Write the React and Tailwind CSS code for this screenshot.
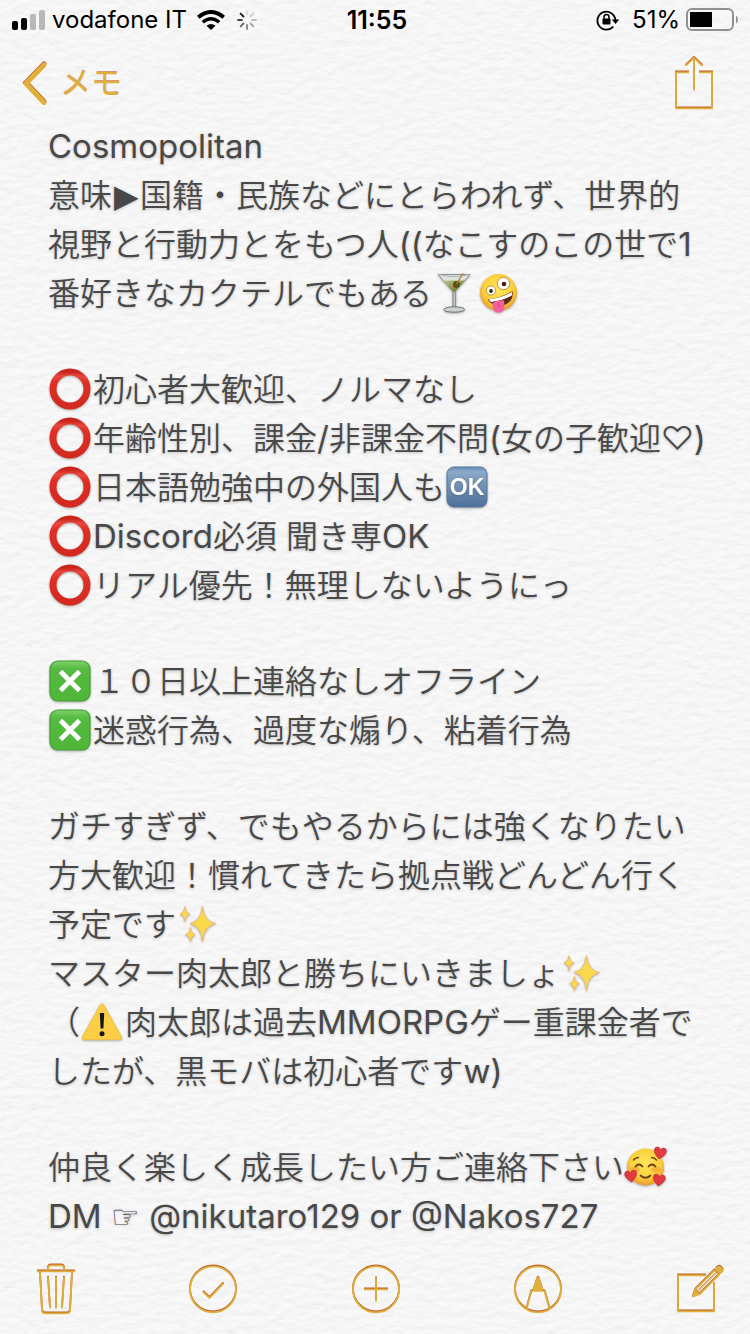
import React from "react";

/* ---------- paper background ---------- */

function Paper() {
  return (
    <svg aria-hidden="true" className="absolute inset-0 -z-10 h-full w-full">
      <filter id="paper" x="0" y="0" width="100%" height="100%" colorInterpolationFilters="sRGB">
        <feTurbulence type="fractalNoise" baseFrequency="0.08 0.14" numOctaves="3" seed="4" result="noise" />
        <feDiffuseLighting in="noise" lightingColor="#ffffff" surfaceScale="0.5" diffuseConstant="1.09">
          <feDistantLight azimuth="260" elevation="62" />
        </feDiffuseLighting>
      </filter>
      <rect width="100%" height="100%" fill="#f7f7f7" />
      <rect width="100%" height="100%" filter="url(#paper)" opacity="0.35" />
    </svg>
  );
}

/* ---------- letterpress icons ---------- */

function Press({ w, h, children, className = "" }) {
  return (
    <svg
      aria-hidden="true"
      width={w}
      height={h}
      viewBox={`0 0 ${w} ${h}`}
      fill="none"
      strokeWidth="1.8"
      className={`block overflow-visible ${className}`}
    >
      <g stroke="#bd5a28" fill="none" color="#bd5a28" transform="translate(0 -0.6)">{children}</g>
      <g stroke="#dfb03c" fill="none" color="#dfb03c" transform="translate(0 0.4)">{children}</g>
    </svg>
  );
}

const BackIcon = () => (
  <Press w={28} h={44}>
    <path d="M24 3.500 6 22.200 24 41" strokeWidth="5" strokeLinecap="round" />
  </Press>
);

const ShareIcon = () => (
  <Press w={40} h={54}>
    <path d="M15 16H2v36h36V16H25" />
    <path d="M20 34V2M11.500 9.500 20 1.500l8.500 8" />
  </Press>
);

const TrashIcon = () => (
  <Press w={38} h={50}>
    <path d="M0 7h38" />
    <path d="M11 7V4q0-3 3-3h10q3 0 3 3v3" />
    <path d="M3 8l2 38q.2 3 3 3h22q2.800 0 3-3l2-38" />
    <path d="M11 12.500l2 31.500M19 12.500V44M27 12.500 25 44" />
  </Press>
);

const CheckIcon = () => (
  <Press w={48} h={48}>
    <circle cx="24" cy="24" r="23" />
    <path d="M14 26.500l6.500 6L34.500 18" />
  </Press>
);

const PlusIcon = () => (
  <Press w={48} h={48}>
    <circle cx="24" cy="24" r="23" />
    <path d="M24 12v24M12 24h24" />
  </Press>
);

const MarkupIcon = () => (
  <Press w={48} h={48}>
    <circle cx="24" cy="24" r="23" />
    <path d="M12.500 43.500 17 27q.4-1.500 1.500-1.500h11q1.100 0 1.500 1.500l4.500 16.500" />
    <path d="M18.500 25.500 22.600 12.500q1.400-2.400 2.800 0l4.100 13z" fill="currentColor" stroke="none" />
  </Press>
);

const ComposeIcon = () => (
  <Press w={48} h={48}>
    <path d="M30 10H2v36h36V18" />
    <path d="M17 31l2.500-7L38.500 5l4.500 4.500L24 28.500z" strokeLinejoin="round" />
    <path d="M22 26 40.500 7.500" strokeWidth="1" />
    <path d="M17 31l2.500-7 4.500 4.500z" fill="currentColor" stroke="none" />
    <path d="M40.500 3l1.500-1.300q1.500-1 2.800.3l1.200 1.200q1.300 1.500.2 2.800L44.800 7.500z" fill="currentColor" />
  </Press>
);

/* ---------- emoji ---------- */

function Emoji({ label, children }) {
  return (
    <svg
      role="img"
      aria-label={label}
      viewBox="0 0 42 42"
      className="mr-0.5 mb-0.5 ml-px inline-block h-[42px] w-[42px] shrink-0 overflow-visible drop-shadow-[0_1px_1px_rgba(0,0,0,0.3)]"
    >
      {children}
    </svg>
  );
}

const Circle = () => (
  <Emoji label="まる">
    <defs>
      <linearGradient id="red" x1="0" y1="0" x2="0" y2="1">
        <stop offset="0" stopColor="#c9251c" />
        <stop offset=".12" stopColor="#e8483e" />
        <stop offset=".3" stopColor="#e02f24" />
        <stop offset="1" stopColor="#d3291f" />
      </linearGradient>
    </defs>
    <circle cx="21" cy="21" r="17" fill="none" stroke="url(#red)" strokeWidth="7" />
  </Emoji>
);

const Cross = () => (
  <Emoji label="ばつ">
    <defs>
      <linearGradient id="green" x1="0" y1="0" x2="0" y2="1">
        <stop offset="0" stopColor="#7ed169" />
        <stop offset=".2" stopColor="#55bb41" />
        <stop offset="1" stopColor="#4fb638" />
      </linearGradient>
    </defs>
    <rect x="1" y="1" width="40" height="40" rx="8" fill="url(#green)" stroke="#459f34" strokeWidth="1.200" />
    <path d="M11.500 11.500l19 19M30.500 11.500l-19 19" stroke="#fff" strokeWidth="4.800" />
  </Emoji>
);

const Ok = () => (
  <Emoji label="OK">
    <defs>
      <linearGradient id="blue" x1="0" y1="0" x2="0" y2="1">
        <stop offset="0" stopColor="#6a8db3" />
        <stop offset=".12" stopColor="#8ba9c8" />
        <stop offset="1" stopColor="#4d7099" />
      </linearGradient>
    </defs>
    <rect x="1" y="1" width="40" height="40" rx="7" fill="url(#blue)" stroke="#53779f" />
    <text x="21" y="29" textAnchor="middle" fill="#fff" fontSize="23" className="font-['Liberation_Sans'] font-bold">OK</text>
  </Emoji>
);

const Cocktail = () => (
  <Emoji label="カクテル">
    <defs>
      <linearGradient id="drink" x1="0" y1="0" x2="1" y2="1">
        <stop offset="0" stopColor="#c3c88c" />
        <stop offset="1" stopColor="#5f6b1c" />
      </linearGradient>
    </defs>
    <path d="M5 2.500h32L23 18.500q-2 2.500-4 0z" fill="#dfe3e0" stroke="#7f8785" strokeWidth=".9" />
    <path d="M10 8.500h22l-9 10q-2 2-4 0z" fill="url(#drink)" />
    <path d="M6 2.500q15 4 30 0" fill="none" stroke="#aab2af" />
    <circle cx="23.500" cy="12.500" r="3.400" fill="#4d5918" />
    <circle cx="21.500" cy="14" r="1.500" fill="#a33320" />
    <path d="M23.500 12 30 1.500" stroke="#b98334" strokeWidth="1.400" />
    <path d="M20 19v16M22.500 19v16" stroke="#8d9391" strokeWidth="1.300" />
    <ellipse cx="21.200" cy="37.500" rx="10.500" ry="2.700" fill="#cdd1cf" stroke="#6d7472" />
  </Emoji>
);

function FaceGradient() {
  return (
    <defs>
      <radialGradient id="face" cx=".5" cy=".4" r=".62">
        <stop offset="0" stopColor="#ffe75a" />
        <stop offset=".65" stopColor="#fbcf3e" />
        <stop offset="1" stopColor="#e8932a" />
      </radialGradient>
    </defs>
  );
}

const Zany = () => (
  <Emoji label="おどけた顔">
    <FaceGradient />
    <circle cx="20.500" cy="20.500" r="18.500" fill="url(#face)" />
    <circle cx="13" cy="18.500" r="4.600" fill="#fff" stroke="#b57d2c" strokeWidth=".8" />
    <circle cx="13" cy="19" r="1.900" fill="#3d2415" />
    <circle cx="25.500" cy="11.500" r="6.200" fill="#fff" stroke="#b57d2c" strokeWidth=".8" />
    <circle cx="26" cy="12" r="2.300" fill="#3d2415" />
    <path d="M9.500 27.500q14-1.500 25-8.500q1.500 10-7 13.500-11 4-18-5z" fill="#5b2a17" />
    <path d="M10.500 27.500q13-1.500 23.500-7.500l-.2 3.500q-9 5-20.800 6.500z" fill="#fff" />
    <path d="M14.500 31q6-3.500 11.500-2.500l.5 6q0 5.500-5.500 6-5.500.2-6-4.500z" fill="#f2619b" />
    <path d="M20.500 31l.6 4.500" stroke="#cf3f7b" strokeWidth="1" />
  </Emoji>
);

const Heart = ({ x, y, turn }) => (
  <path
    transform={`translate(${x} ${y}) rotate(${turn})`}
    d="M0 6Q-6 1.500-6-2q0-3.500 3-3.500Q-1-5.500 0-3q1-2.500 3-2.500 3 0 3 3.500Q6 1.500 0 6z"
    fill="#e23a40"
    stroke="#b9252f"
    strokeWidth=".6"
  />
);

const Loving = () => (
  <Emoji label="ハートの笑顔">
    <FaceGradient />
    <circle cx="20.500" cy="21" r="18.500" fill="url(#face)" />
    <ellipse cx="10" cy="23.500" rx="5" ry="3" fill="#f08a35" opacity=".45" />
    <ellipse cx="31" cy="23.500" rx="5" ry="3" fill="#f08a35" opacity=".45" />
    <g fill="none" stroke="#6b3d13" strokeWidth="1.800" strokeLinecap="round">
      <path d="M10.500 20.500q3.500-4 7 0M23.500 20.500q3.500-4 7 0" />
      <path d="M15.500 29.500q5 4.500 10 0" />
      <path d="M8.500 14q2-2.500 5-2.500M26.500 11.500q3 0 5 2.500" strokeWidth="1.300" />
    </g>
    <Heart x={35} y={7} turn={10} />
    <Heart x={6} y={30} turn={-8} />
    <Heart x={34} y={34} turn={8} />
  </Emoji>
);

const Sparkles = () => (
  <Emoji label="キラキラ">
    <g fill="#f9d84a" stroke="#eeb076" strokeWidth=".8">
      <path d="M25.500 3.500Q27 18 38.500 20.500 27 23 25.500 38.500 24 23 13 20.500 24 18 25.500 3.500z" />
      <path d="M8 3.500q.6 6.300 5 7.500-4.400 1.200-5 7.500-.6-6.300-5-7.500 4.400-1.200 5-7.500z" />
      <path d="M13.500 24.500q.6 6 5 7.200-4.400 1.200-5 7.200-.6-6-5-7.200 4.400-1.200 5-7.200z" />
    </g>
  </Emoji>
);

const Warning = () => (
  <Emoji label="注意">
    <path d="M18.900 4.500q2.100-3.400 4.200 0l17.400 31.300q1.200 2.700-1.600 2.900H3.100q-2.800-.2-1.600-2.900z" fill="#fbce45" stroke="#f0bd3a" strokeWidth=".8" />
    <path d="M18.800 12h4.400l-.8 15.500h-2.800z" fill="#161616" />
    <circle cx="21" cy="32.800" r="2.500" fill="#161616" />
  </Emoji>
);

/* ---------- text helpers ---------- */

const L = ({ children }) => <span className="text-[33px] font-normal">{children}</span>;

const Line = ({ children }) => (
  <p className="flex h-[49px] items-center whitespace-pre">{children}</p>
);

const Gap = () => <div className="h-[47px]" />;

/* ---------- bars ---------- */

function StatusBar() {
  return (
    <div className="grid h-10 grid-cols-[1fr_auto_1fr] items-center px-3 text-[24px] leading-10 text-black">
      <div className="flex items-center">
        <svg aria-hidden="true" width="34" height="22" viewBox="0 0 34 22" className="mr-1.5">
          <rect x="0" y="12" width="6" height="9" rx="2" />
          <rect x="9" y="9" width="6" height="12" rx="2" />
          <rect x="18" y="5" width="6" height="16" rx="2" fill="#b8b8b8" />
          <rect x="27" y="1" width="6" height="20" rx="2" fill="#b8b8b8" />
        </svg>
        <span>vodafone IT</span>
        <svg aria-hidden="true" width="28" height="20" viewBox="0 0 28 20" className="ml-2.5" fill="none" stroke="#000" strokeWidth="4">
          <path d="M1.300 7.300q12.700-10.500 25.400 0" />
          <path d="M5.800 12.200q8.200-7 16.400 0" strokeWidth="3.400" />
          <path d="M14 20 9.500 15.800q4.500-3.400 9 0z" fill="#000" stroke="none" />
        </svg>
        <svg aria-hidden="true" width="20" height="20" viewBox="-10 -10 20 20" className="ml-3" strokeWidth="1.900" strokeLinecap="round">
          <path d="M0-5v-4" stroke="#e0e0e0" />
          <path d="M3.500-3.500 6.400-6.400" stroke="#cfcfcf" />
          <path d="M5 0h4" stroke="#bdbdbd" />
          <path d="M3.500 3.500 6.400 6.400" stroke="#a6a6a6" />
          <path d="M0 5v4" stroke="#858585" />
          <path d="M-3.500 3.500-6.400 6.400" stroke="#6a6a6a" />
          <path d="M-5 0h-4" stroke="#444" />
          <path d="M-3.500-3.500-6.400-6.400" stroke="#222" />
        </svg>
      </div>
      <span className="pl-1 text-center text-[25px] font-semibold">11:55</span>
      <div className="flex items-center justify-end">
        <svg aria-hidden="true" width="24" height="22" viewBox="0 0 24 22" className="mr-3" fill="none" stroke="#000" strokeWidth="1.800">
          <path d="M17.300 17.500A9 9 0 1 1 19.400 11" />
          <path d="M15.800 10.500h7.400l-3.700 4.500z" fill="#000" stroke="none" />
          <rect x="6.500" y="9.600" width="8" height="6" rx="1" fill="#000" stroke="none" />
          <path d="M8 10V8q0-2.600 2.500-2.600T13 8v2" strokeWidth="1.500" />
        </svg>
        <span>51%</span>
        <svg aria-hidden="true" width="52" height="24" viewBox="0 0 52 24" className="ml-1.5" fill="none">
          <rect x="1" y="1" width="46" height="21" rx="5" stroke="#919191" strokeWidth="2" />
          <rect x="4" y="4" width="22" height="15" fill="#000" />
          <path d="M50 7.500q2 1.500 2 4t-2 4z" fill="#919191" />
        </svg>
      </div>
    </div>
  );
}

export default function App() {
  return (
    <div className="relative isolate flex min-h-screen flex-col font-['Inter','Noto_Sans_CJK_JP',sans-serif]">
      <Paper />
      <StatusBar />

      <header className="flex h-[82px] items-center justify-between pt-1 pr-9 pl-5">
        <button type="button" className="flex items-center gap-3 text-[31px] leading-10 text-[#dfb03c] [text-shadow:0_-1px_0_#bd5a2899]">
          <BackIcon />
          <span>メモ</span>
        </button>
        <button type="button" aria-label="共有">
          <ShareIcon />
        </button>
      </header>

      <main className="flex-1 pr-6 pl-12 text-[32px] font-[350] text-[#484848] [text-shadow:0_1px_3px_rgba(0,0,0,0.22)]">
        <Line><L>Cosmopolitan</L></Line>
        <Line>意味<span className="mr-px ml-0.5 font-['DejaVu_Sans']">▶</span>国籍・民族などにとらわれず、世界的</Line>
        <Line>視野と行動力とをもつ人<L>((</L>なこすのこの世で<L>1</L></Line>
        <Line>番好きなカクテルでもある<Cocktail /><Zany /></Line>
        <Gap />
        <Line><Circle />初心者大歓迎、ノルマなし</Line>
        <Line><Circle />年齢性別、課金<L>/</L>非課金不問<L>(</L>女の子歓迎♡<L>)</L></Line>
        <Line><Circle />日本語勉強中の外国人も<Ok /></Line>
        <Line><Circle /><L>Discord</L>必須 聞き専<L>OK</L></Line>
        <Line><Circle />リアル優先！無理しないようにっ</Line>
        <Gap />
        <Line><Cross />１０日以上連絡なしオフライン</Line>
        <Line><Cross />迷惑行為、過度な煽り、粘着行為</Line>
        <Gap />
        <Line>ガチすぎず、でもやるからには強くなりたい</Line>
        <Line>方大歓迎！慣れてきたら拠点戦どんどん行く</Line>
        <Line>予定です<Sparkles /></Line>
        <Line>マスター肉太郎と勝ちにいきましょ<Sparkles /></Line>
        <Line>（<Warning />肉太郎は過去<L>MMORPG</L>ゲー重課金者で</Line>
        <Line>したが、黒モバは初心者です<L>w)</L></Line>
        <Gap />
        <Line>仲良く楽しく成長したい方ご連絡下さい<Loving /></Line>
        <Line><L>DM </L><span className="font-['DejaVu_Sans']">☞</span><L> @nikutaro129 or @Nakos727</L></Line>
      </main>

      <footer className="flex h-[90px] items-center justify-between pr-[26px] pl-[37px]">
        <button type="button" aria-label="削除"><TrashIcon /></button>
        <button type="button" aria-label="チェックリスト"><CheckIcon /></button>
        <button type="button" aria-label="追加"><PlusIcon /></button>
        <button type="button" aria-label="マークアップ"><MarkupIcon /></button>
        <button type="button" aria-label="新規メモ"><ComposeIcon /></button>
      </footer>
    </div>
  );
}
